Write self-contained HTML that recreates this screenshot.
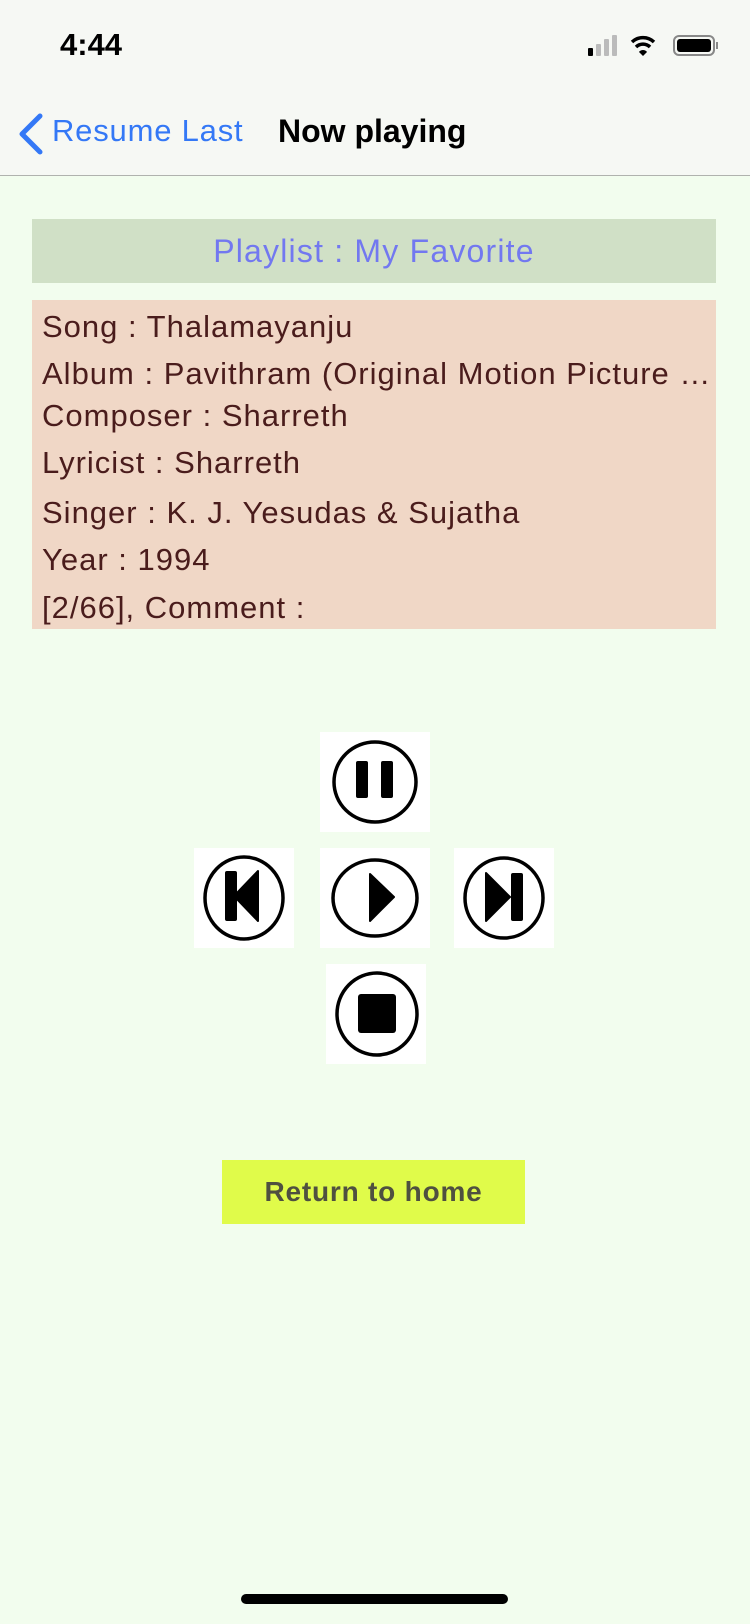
<!DOCTYPE html>
<html><head><meta charset="utf-8"><style>
*{margin:0;padding:0;box-sizing:border-box}
body{width:750px;height:1624px;background:#f2fdee;font-family:"Liberation Sans",sans-serif;position:relative;overflow:hidden}
.hdr{position:absolute;left:0;top:0;width:750px;height:176px;background:#f6f8f4;border-bottom:1px solid #b0b2ae}
.abs{position:absolute}
.pl{left:32px;top:219px;width:684px;height:64px;background:#d0e0c6;color:#7278f0;font-size:32px;letter-spacing:1.2px;text-align:center;line-height:64px}
.info{left:32px;top:300px;width:684px;height:329px;background:#f0d7c6;color:#4a1c1c;font-size:31px;letter-spacing:1px}
.info div{position:absolute;left:10px;white-space:nowrap;width:672px;overflow:hidden;text-overflow:ellipsis}
.btn{background:#fff}
.ret{left:222px;top:1160px;width:303px;height:64px;background:#e0fb4a;color:#4f5040;font-weight:bold;font-size:28px;letter-spacing:0.8px;text-align:center;line-height:64px}
</style></head><body>
<div class="hdr"></div>
<div class="abs" style="left:60px;top:27px;font-size:31px;font-weight:bold;color:#000">4:44</div>
<svg class="abs" style="left:586px;top:34px" width="140" height="24">
<rect x="2" y="14" width="5" height="8" rx="1" fill="#000"/>
<rect x="10" y="10" width="5" height="12" rx="1" fill="#bbb"/>
<rect x="18" y="5" width="5" height="17" rx="1" fill="#bbb"/>
<rect x="26" y="1" width="5" height="21" rx="1" fill="#bbb"/>
<path d="M46 8 a16 16 0 0 1 22 0" stroke="#000" stroke-width="3.5" fill="none"/>
<path d="M50 13 a10 10 0 0 1 14 0" stroke="#000" stroke-width="3.5" fill="none"/>
<path d="M57 22 l-4 -4 a5 5 0 0 1 8 0z" fill="#000"/>
<rect x="88" y="2" width="40" height="19" rx="5" fill="none" stroke="#888" stroke-width="2"/>
<rect x="91" y="5" width="34" height="13" rx="3" fill="#000"/>
<rect x="130" y="8" width="2" height="7" fill="#888"/>
</svg>
<svg class="abs" style="left:16px;top:112px" width="28" height="44"><path d="M24 4 L6 22 L24 40" stroke="#3478f6" stroke-width="5" fill="none" stroke-linecap="round" stroke-linejoin="round"/></svg>
<div class="abs" style="left:52px;top:113px;font-size:31px;letter-spacing:0.8px;color:#3478f6">Resume Last</div>
<div class="abs" style="left:278px;top:113px;font-size:32px;font-weight:bold;color:#000">Now playing</div>
<div class="abs pl">Playlist : My Favorite</div>
<div class="abs info">
<div style="top:9px">Song : Thalamayanju</div>
<div style="top:56px">Album : Pavithram (Original Motion Picture Soundtrack)</div>
<div style="top:98px">Composer : Sharreth</div>
<div style="top:145px">Lyricist : Sharreth</div>
<div style="top:195px">Singer : K. J. Yesudas &amp; Sujatha</div>
<div style="top:242px">Year : 1994</div>
<div style="top:290px">[2/66], Comment :</div>
</div>
<svg class="abs btn" style="left:320px;top:732px" width="110" height="100"><ellipse cx="55" cy="50" rx="41" ry="40" fill="none" stroke="#000" stroke-width="3.5"/><rect x="36" y="29" width="12" height="37" rx="2"/><rect x="61" y="29" width="12" height="37" rx="2"/></svg>
<svg class="abs btn" style="left:194px;top:848px" width="100" height="100"><ellipse cx="50" cy="50" rx="39" ry="41" fill="none" stroke="#000" stroke-width="3.5"/><rect x="31" y="23" width="12" height="50" rx="2"/><path d="M64 23 L64 73 L40 48Z" stroke="#000" stroke-linejoin="round" stroke-width="2"/></svg>
<svg class="abs btn" style="left:320px;top:848px" width="110" height="100"><ellipse cx="55" cy="50" rx="42" ry="38" fill="none" stroke="#000" stroke-width="3.5"/><path d="M50 26 L50 73 L74 49Z" stroke="#000" stroke-linejoin="round" stroke-width="2"/></svg>
<svg class="abs btn" style="left:454px;top:848px" width="100" height="100"><ellipse cx="50" cy="50" rx="39" ry="40" fill="none" stroke="#000" stroke-width="3.5"/><path d="M32 25 L32 73 L56 49Z" stroke="#000" stroke-linejoin="round" stroke-width="2"/><rect x="57" y="25" width="12" height="48" rx="2"/></svg>
<svg class="abs btn" style="left:326px;top:964px" width="100" height="100"><ellipse cx="51" cy="50" rx="40" ry="41" fill="none" stroke="#000" stroke-width="3.5"/><rect x="32" y="30" width="38" height="39" rx="3"/></svg>
<div class="abs ret">Return to home</div>
<div class="abs" style="left:241px;top:1594px;width:267px;height:10px;border-radius:5px;background:#000"></div>
</body></html>
